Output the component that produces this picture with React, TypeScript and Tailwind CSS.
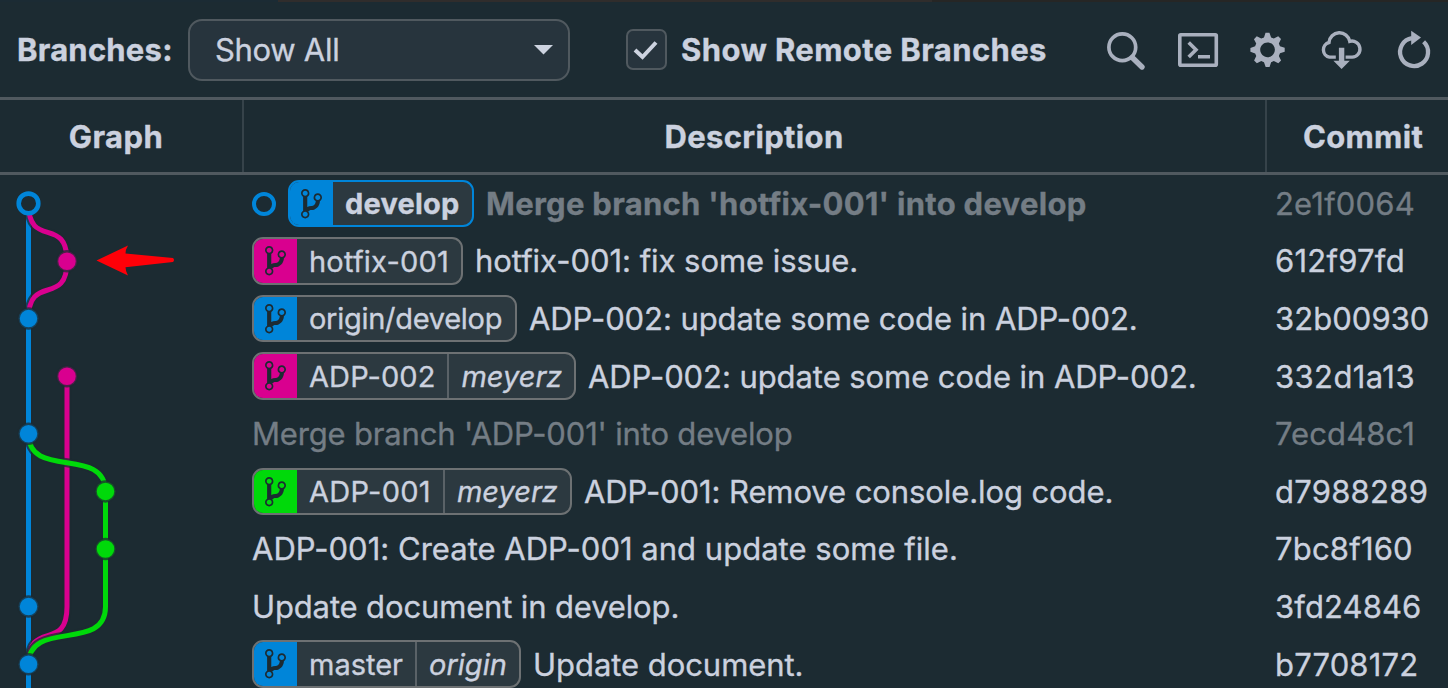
import React from "react";

const BRANCH_PATH =
  "M10 5c0-1.11-.89-2-2-2a1.993 1.993 0 00-1 3.72v.3c-.02.52-.23.98-.63 1.38-.4.4-.86.61-1.38.63-.83.02-1.48.16-2 .45V4.72a1.993 1.993 0 00-1-3.72C.88 1 0 1.89 0 3a2 2 0 001 1.72v6.56c-.59.35-1 .99-1 1.72 0 1.11.89 2 2 2 1.11 0 2-.89 2-2 0-.53-.2-1-.53-1.36.09-.06.48-.41.59-.47.25-.11.56-.17.94-.17 1.05-.05 1.95-.45 2.75-1.25S8.95 7.77 9 6.73h-.02C9.59 6.37 10 5.73 10 5zM2 1.8c.66 0 1.2.55 1.2 1.2 0 .65-.55 1.2-1.2 1.2C1.35 4.2.8 3.65.8 3c0-.65.55-1.2 1.2-1.2zm0 12.41c-.66 0-1.2-.55-1.2-1.2 0-.65.55-1.2 1.2-1.2.65 0 1.2.55 1.2 1.2 0 .65-.55 1.2-1.2 1.2zm6-8c-.66 0-1.2-.55-1.2-1.2 0-.65.55-1.2 1.2-1.2.65 0 1.2.55 1.2 1.2 0 .65-.55 1.2-1.2 1.2z";

const GEAR_PATH =
  "M14 8.77v-1.6l-1.94-.64-.45-1.09.88-1.84-1.13-1.13-1.81.91-1.09-.45-.69-1.92h-1.6l-.63 1.94-1.11.45-1.84-.88-1.13 1.13.91 1.81-.45 1.09L0 7.23v1.59l1.94.64.45 1.09-.88 1.84 1.13 1.13 1.81-.91 1.09.45.69 1.92h1.59l.63-1.94 1.11-.45 1.84.88 1.13-1.13-.92-1.81.47-1.09L14 8.75v.02zM7 11c-1.66 0-3-1.34-3-3s1.34-3 3-3 3 1.34 3 3-1.34 3-3 3z";

type Ref = {
  name: string;
  remote?: string;
  fill: string;
  head?: boolean;
  width: string;
  nameTracking: string;
};

type Commit = {
  hash: string;
  hashTracking: string;
  message: string;
  tracking: string;
  muted?: boolean;
  bold?: boolean;
  ref?: Ref;
};

const BLUE = "bg-[#0085d9]";
const PINK = "bg-[#d9008f]";
const GREEN = "bg-[#00d90a]";

const COMMITS: Commit[] = [
  {
    hash: "2e1f0064", hashTracking: "tracking-[0.2px]", message: "Merge branch 'hotfix-001' into develop", tracking: "tracking-[0.29px]", muted: true, bold: true,
    ref: { name: "develop", fill: BLUE, head: true, width: "w-[186px]", nameTracking: "tracking-[0.2px]" },
  },
  {
    hash: "612f97fd", hashTracking: "tracking-[0.25px]", message: "hotfix-001: fix some issue.", tracking: "tracking-[-0.04px]",
    ref: { name: "hotfix-001", fill: PINK, width: "w-[211px]", nameTracking: "tracking-[0.2px]" },
  },
  {
    hash: "32b00930", hashTracking: "tracking-[0.05px]", message: "ADP-002: update some code in ADP-002.", tracking: "tracking-[-0.07px]",
    ref: { name: "origin/develop", fill: BLUE, width: "w-[265px]", nameTracking: "tracking-[-0.28px]" },
  },
  {
    hash: "332d1a13", hashTracking: "tracking-[0.4px]", message: "ADP-002: update some code in ADP-002.", tracking: "tracking-[-0.07px]",
    ref: { name: "ADP-002", remote: "meyerz", fill: PINK, width: "w-[324px]", nameTracking: "tracking-[0.1px]" },
  },
  { hash: "7ecd48c1", hashTracking: "tracking-[0.1px]", message: "Merge branch 'ADP-001' into develop", tracking: "tracking-[-0.17px]", muted: true },
  {
    hash: "d7988289", hashTracking: "tracking-[0.25px]", message: "ADP-001: Remove console.log code.", tracking: "tracking-[-0.09px]",
    ref: { name: "ADP-001", remote: "meyerz", fill: GREEN, width: "w-[320px]", nameTracking: "tracking-[0.3px]" },
  },
  { hash: "7bc8f160", hashTracking: "tracking-[0.2px]", message: "ADP-001: Create ADP-001 and update some file.", tracking: "tracking-[0.02px]" },
  { hash: "3fd24846", hashTracking: "tracking-[0.1px]", message: "Update document in develop.", tracking: "tracking-[-0.14px]" },
  {
    hash: "b7708172", hashTracking: "tracking-[0.15px]", message: "Update document.", tracking: "tracking-[-0.05px]",
    ref: { name: "master", remote: "origin", fill: BLUE, width: "w-[269px]", nameTracking: "tracking-[0px]" },
  },
];

function RefLabel({ r }: { r: Ref }) {
  return (
    <span
      className={`flex h-[47.6px] shrink-0 overflow-hidden rounded-[11px] border-2 bg-[#2c3940] text-[29px] ${r.width} ${
        r.head ? "border-[#0085d9] font-bold" : "border-[#6d7173]"
      }`}
    >
      <span className={`flex w-[43px] shrink-0 items-center justify-center ${r.fill}`}>
        <svg width="21" height="33.6" viewBox="0 0 10 16" fill="#1c2b32">
          <path d={BRANCH_PATH} />
        </svg>
      </span>
      <span className={`flex items-center px-3 pt-px whitespace-nowrap ${r.nameTracking}`}>{r.name}</span>
      {r.remote && (
        <span className="flex flex-1 items-center border-l-2 border-[#5a6267] px-3 pt-px italic">{r.remote}</span>
      )}
    </span>
  );
}

function Graph() {
  const dots: [number, number, string][] = [
    [67, 86.2, "#d9008f"],
    [28.5, 143.6, "#0085d9"],
    [67, 201.2, "#d9008f"],
    [28.5, 258.8, "#0085d9"],
    [105.5, 316.4, "#00d90a"],
    [105.5, 374, "#00d90a"],
    [28.5, 431.6, "#0085d9"],
    [28.5, 489.2, "#0085d9"],
  ];
  const lines: [string, string][] = [
    ["M28.5 28.6V520", "#0085d9"],
    ["M28.5 28.6C28.5 74.7 67 40.1 67 86.2C67 132.3 28.5 97.7 28.5 143.8", "#d9008f"],
    ["M67 201.4V431.8C67 477.9 28.5 443.3 28.5 489.4", "#d9008f"],
    ["M28.5 259C28.5 305.1 105.5 270.5 105.5 316.6V431.8C105.5 477.9 28.5 443.3 28.5 489.4", "#00d90a"],
  ];
  return (
    <svg width="244" height="514" viewBox="0 0 244 514" fill="none" className="shrink-0">
      {lines.map(([d, color]) => (
        <g key={d}>
          <path d={d} stroke="#1c2b32" strokeOpacity=".75" strokeWidth="9" />
          <path d={d} stroke={color} strokeWidth="5" />
        </g>
      ))}
      {dots.map(([x, y, color]) => (
        <circle key={`${x}-${y}`} cx={x} cy={y} r="10" fill={color} stroke="#1c2b32" strokeOpacity=".75" strokeWidth="2.5" />
      ))}
      <circle cx="28.5" cy="28.4" r="9.8" fill="#1c2b32" stroke="#0085d9" strokeWidth="4.6" />
      <path d="M96.5 85.5L128 70.5Q125.5 74.5 125.5 78.5L173 83Q175 85 173 87L125.5 92.3Q125.5 96 128 100.5Z" fill="#ff0008" />
    </svg>
  );
}

function Toolbar() {
  return (
    <div className="flex h-[95px] shrink-0 items-center">
      <span className="ml-[17px] w-[171px] pt-[2px] text-[31px] font-bold tracking-[0.22px]">Branches:</span>
      <button className="flex h-[62px] w-[382px] items-center justify-between rounded-[14px] border-2 border-[#50595f] bg-[#27343d] pr-[15px] pl-[25px] text-[31px]">
        <span className="pt-[2px] tracking-[-0.3px]">Show All</span>
        <svg width="19" height="10" viewBox="0 0 19 10" fill="#cdd3e0"><path d="M0 0H19L9.5 9.5Z" /></svg>
      </button>
      <span className="ml-14 flex size-[41px] items-center justify-center rounded-[7px] border-2 border-[#50595f] bg-[#27343d]">
        <svg className="mt-px mr-0.5" width="25" height="20" viewBox="0 0 25 20" fill="none" stroke="#cdd3e0" strokeWidth="4"><path d="M2 10L9.5 17L23 2.5" /></svg>
      </span>
      <span className="ml-[14px] w-[366px] pt-[2px] whitespace-nowrap text-[31px] font-bold tracking-[0.4px]">Show Remote Branches</span>
      <svg className="ml-[33px] shrink-0" width="368" height="60" viewBox="1080 20 368 60" fill="none" stroke="#a9b0be">
        <circle cx="1122.3" cy="47.2" r="13.4" strokeWidth="3.7" />
        <path d="M1132.5 57.7L1142 67" strokeWidth="5.4" strokeLinecap="round" />
        <rect x="1179.8" y="34.7" width="36.5" height="30.5" rx="1" strokeWidth="3.6" />
        <path d="M1188.7 42.4L1196 49.7L1188.7 57M1198 56.7H1210" strokeWidth="3.6" />
        <path d={GEAR_PATH} transform="translate(1250.4 30.2) scale(2.45)" fill="#a9b0be" stroke="none" />
        <path
          d="M1336.4 57.3H1330A7.5 7.5 0 0 1 1329.6 42.7A10.5 10.5 0 0 1 1350.4 41.6A8 8 0 1 1 1352.8 57.3H1346.2"
          strokeWidth="3.4"
          transform="translate(-0.6 -0.2)"
        />
        <path d="M1338.9 47.7H1344.3V60.7H1349.8L1341.6 69L1333.4 60.7H1338.9Z" fill="#a9b0be" stroke="none" />
        <path d="M1423.6 41.8A14 14 0 1 1 1412 38.2" strokeWidth="4.3" />
        <path d="M1411.2 30.8L1421 37.6L1411.2 45Z" fill="#a9b0be" stroke="none" />
      </svg>
    </div>
  );
}

export default function App() {
  return (
    <div className="flex h-[688px] w-[1448px] flex-col overflow-hidden bg-[#1c2b32] font-['Inter','Liberation_Sans',sans-serif] text-[31px] text-[#cbd1df] [-webkit-text-stroke:0.35px]">
      <div className="flex h-[2px] shrink-0 bg-[#262625]">
        <div className="w-[278px] bg-[#1b2b34]" />
        <div className="w-[654px] bg-[#302d2c]" />
      </div>
      <Toolbar />
      <div className="flex h-[78px] w-[1459px] shrink-0 border-t-[3px] border-b-[3px] border-[#50595f] text-[31px] font-bold">
        <div className="flex w-[244px] items-center justify-center border-r-2 border-[#36434a] pt-[2px] pr-[10px] tracking-[0.45px]">Graph</div>
        <div className="flex w-[1023px] items-center justify-center border-r-2 border-[#36434a] pt-[2px] pr-px tracking-[0.35px]">Description</div>
        <div className="flex flex-1 items-center justify-center pt-[2px] tracking-[0.3px]">Commit</div>
      </div>
      <div className="flex">
        <Graph />
        <div className="-mt-[0.4px] flex flex-col">
          {COMMITS.map((c) => (
            <div
              key={c.hash}
              className={`flex h-[57.6px] items-center whitespace-nowrap ${c.muted ? "text-[#747d85]" : ""}`}
            >
              <div className={`flex w-[1023px] items-center pl-2 ${c.bold ? "font-bold" : ""}`}>
                {c.ref?.head && <span className="mt-px mr-3 size-6 rounded-full border-[4.5px] border-[#0085d9]" />}
                {c.ref && (
                  <span className="mr-3 flex text-[#cbd1df]">
                    <RefLabel r={c.ref} />
                  </span>
                )}
                <span className={`pt-[1.2px] ${c.tracking}`}>{c.message}</span>
              </div>
              <span className={`pt-[1.2px] pl-2 ${c.hashTracking}`}>{c.hash}</span>
            </div>
          ))}
        </div>
      </div>
    </div>
  );
}
